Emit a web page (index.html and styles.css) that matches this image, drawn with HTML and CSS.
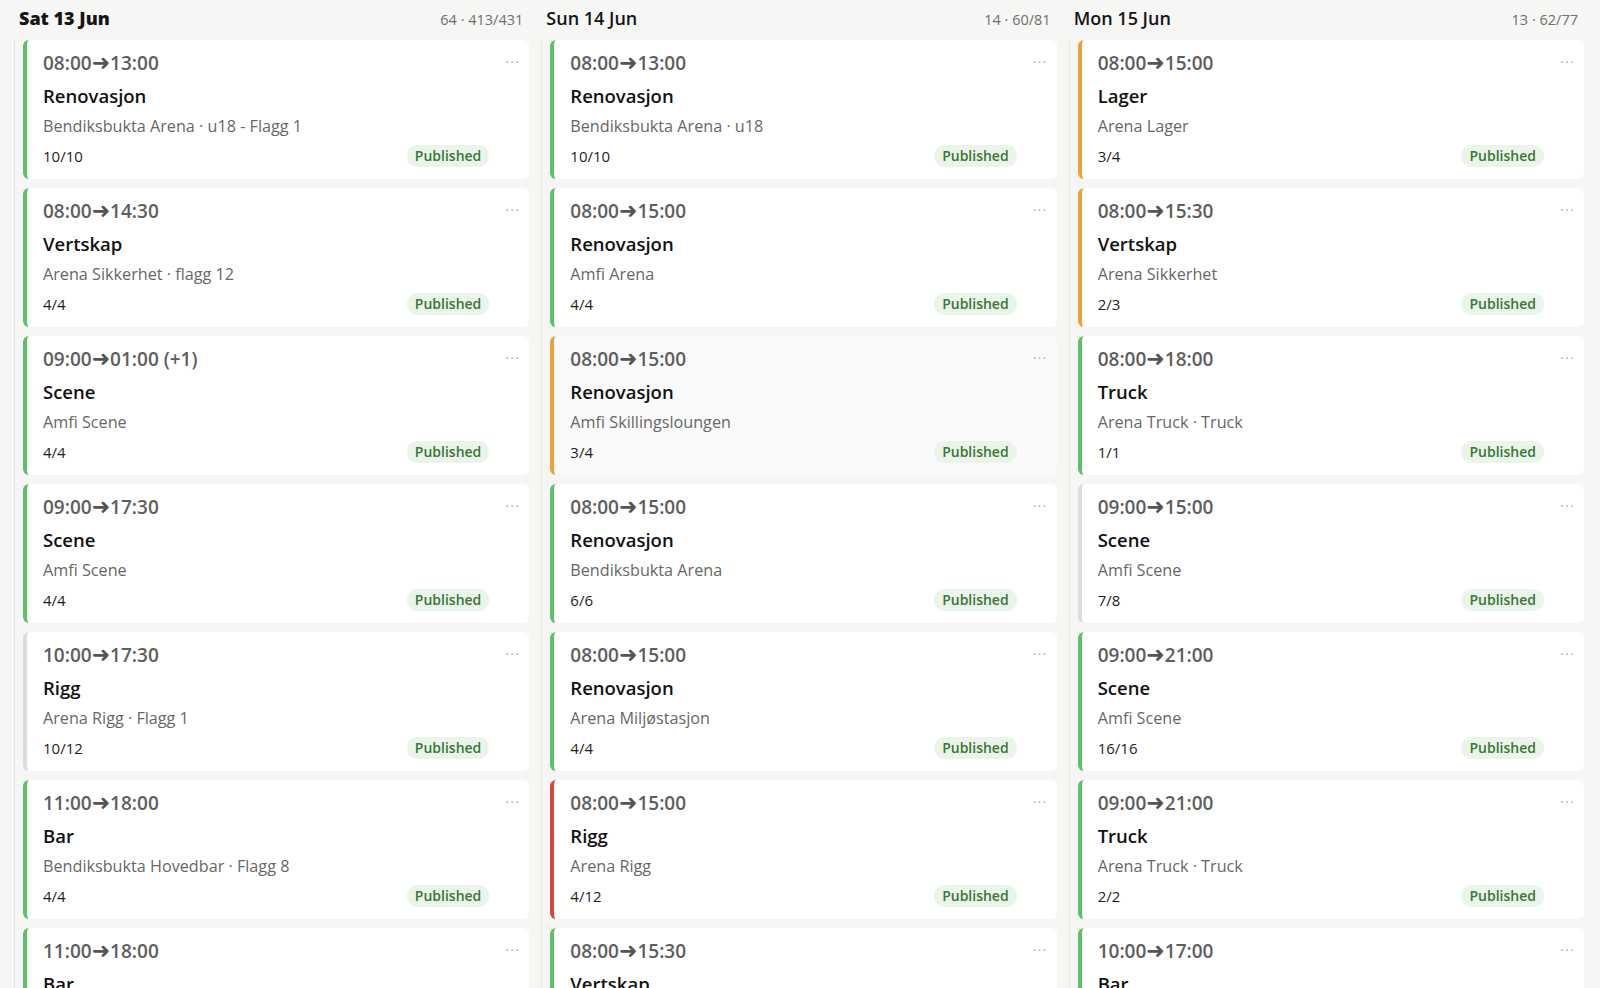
FILE: index.html
```html
<!DOCTYPE html>
<html>
  <head>
    <meta charset="utf-8">
    <link rel="stylesheet" href="styles.css">
  </head>
  <body>
    <div class="board">

      <div class="day">
        <div class="day-head">
          <span class="day-name today">Sat 13 Jun</span>
          <span class="day-count">64 · 413/431</span>
        </div>
        <div class="shifts">
          <div class="shift green">
            <span class="more">···</span>
            <div class="time">08:00<span class="arrow">➜</span>13:00</div>
            <div class="title">Renovasjon</div>
            <div class="place">Bendiksbukta Arena · u18 - Flagg 1</div>
            <div class="foot"><span class="filled">10/10</span><span class="badge">Published</span></div>
          </div>
          <div class="shift green">
            <span class="more">···</span>
            <div class="time">08:00<span class="arrow">➜</span>14:30</div>
            <div class="title">Vertskap</div>
            <div class="place">Arena Sikkerhet · flagg 12</div>
            <div class="foot"><span class="filled">4/4</span><span class="badge">Published</span></div>
          </div>
          <div class="shift green">
            <span class="more">···</span>
            <div class="time">09:00<span class="arrow">➜</span>01:00 (+1)</div>
            <div class="title">Scene</div>
            <div class="place">Amfi Scene</div>
            <div class="foot"><span class="filled">4/4</span><span class="badge">Published</span></div>
          </div>
          <div class="shift green">
            <span class="more">···</span>
            <div class="time">09:00<span class="arrow">➜</span>17:30</div>
            <div class="title">Scene</div>
            <div class="place">Amfi Scene</div>
            <div class="foot"><span class="filled">4/4</span><span class="badge">Published</span></div>
          </div>
          <div class="shift gray">
            <span class="more">···</span>
            <div class="time">10:00<span class="arrow">➜</span>17:30</div>
            <div class="title">Rigg</div>
            <div class="place">Arena Rigg · Flagg 1</div>
            <div class="foot"><span class="filled">10/12</span><span class="badge">Published</span></div>
          </div>
          <div class="shift green">
            <span class="more">···</span>
            <div class="time">11:00<span class="arrow">➜</span>18:00</div>
            <div class="title">Bar</div>
            <div class="place">Bendiksbukta Hovedbar · Flagg 8</div>
            <div class="foot"><span class="filled">4/4</span><span class="badge">Published</span></div>
          </div>
          <div class="shift green">
            <span class="more">···</span>
            <div class="time">11:00<span class="arrow">➜</span>18:00</div>
            <div class="title">Bar</div>
            <div class="place">Bendiksbukta Hovedbar · Flagg 9</div>
            <div class="foot"><span class="filled">4/4</span><span class="badge">Published</span></div>
          </div>
        </div>
      </div>

      <div class="day">
        <div class="day-head">
          <span class="day-name">Sun 14 Jun</span>
          <span class="day-count">14 · 60/81</span>
        </div>
        <div class="shifts">
          <div class="shift green">
            <span class="more">···</span>
            <div class="time">08:00<span class="arrow">➜</span>13:00</div>
            <div class="title">Renovasjon</div>
            <div class="place">Bendiksbukta Arena · u18</div>
            <div class="foot"><span class="filled">10/10</span><span class="badge">Published</span></div>
          </div>
          <div class="shift green">
            <span class="more">···</span>
            <div class="time">08:00<span class="arrow">➜</span>15:00</div>
            <div class="title">Renovasjon</div>
            <div class="place">Amfi Arena</div>
            <div class="foot"><span class="filled">4/4</span><span class="badge">Published</span></div>
          </div>
          <div class="shift orange hover">
            <span class="more">···</span>
            <div class="time">08:00<span class="arrow">➜</span>15:00</div>
            <div class="title">Renovasjon</div>
            <div class="place">Amfi Skillingsloungen</div>
            <div class="foot"><span class="filled">3/4</span><span class="badge">Published</span></div>
          </div>
          <div class="shift green">
            <span class="more">···</span>
            <div class="time">08:00<span class="arrow">➜</span>15:00</div>
            <div class="title">Renovasjon</div>
            <div class="place">Bendiksbukta Arena</div>
            <div class="foot"><span class="filled">6/6</span><span class="badge">Published</span></div>
          </div>
          <div class="shift green">
            <span class="more">···</span>
            <div class="time">08:00<span class="arrow">➜</span>15:00</div>
            <div class="title">Renovasjon</div>
            <div class="place">Arena Miljøstasjon</div>
            <div class="foot"><span class="filled">4/4</span><span class="badge">Published</span></div>
          </div>
          <div class="shift red">
            <span class="more">···</span>
            <div class="time">08:00<span class="arrow">➜</span>15:00</div>
            <div class="title">Rigg</div>
            <div class="place">Arena Rigg</div>
            <div class="foot"><span class="filled">4/12</span><span class="badge">Published</span></div>
          </div>
          <div class="shift green">
            <span class="more">···</span>
            <div class="time">08:00<span class="arrow">➜</span>15:30</div>
            <div class="title">Vertskap</div>
            <div class="place">Arena Sikkerhet</div>
            <div class="foot"><span class="filled">4/4</span><span class="badge">Published</span></div>
          </div>
        </div>
      </div>

      <div class="day">
        <div class="day-head">
          <span class="day-name">Mon 15 Jun</span>
          <span class="day-count">13 · 62/77</span>
        </div>
        <div class="shifts">
          <div class="shift orange">
            <span class="more">···</span>
            <div class="time">08:00<span class="arrow">➜</span>15:00</div>
            <div class="title">Lager</div>
            <div class="place">Arena Lager</div>
            <div class="foot"><span class="filled">3/4</span><span class="badge">Published</span></div>
          </div>
          <div class="shift orange">
            <span class="more">···</span>
            <div class="time">08:00<span class="arrow">➜</span>15:30</div>
            <div class="title">Vertskap</div>
            <div class="place">Arena Sikkerhet</div>
            <div class="foot"><span class="filled">2/3</span><span class="badge">Published</span></div>
          </div>
          <div class="shift green">
            <span class="more">···</span>
            <div class="time">08:00<span class="arrow">➜</span>18:00</div>
            <div class="title">Truck</div>
            <div class="place">Arena Truck · Truck</div>
            <div class="foot"><span class="filled">1/1</span><span class="badge">Published</span></div>
          </div>
          <div class="shift gray">
            <span class="more">···</span>
            <div class="time">09:00<span class="arrow">➜</span>15:00</div>
            <div class="title">Scene</div>
            <div class="place">Amfi Scene</div>
            <div class="foot"><span class="filled">7/8</span><span class="badge">Published</span></div>
          </div>
          <div class="shift green">
            <span class="more">···</span>
            <div class="time">09:00<span class="arrow">➜</span>21:00</div>
            <div class="title">Scene</div>
            <div class="place">Amfi Scene</div>
            <div class="foot"><span class="filled">16/16</span><span class="badge">Published</span></div>
          </div>
          <div class="shift green">
            <span class="more">···</span>
            <div class="time">09:00<span class="arrow">➜</span>21:00</div>
            <div class="title">Truck</div>
            <div class="place">Arena Truck · Truck</div>
            <div class="foot"><span class="filled">2/2</span><span class="badge">Published</span></div>
          </div>
          <div class="shift green">
            <span class="more">···</span>
            <div class="time">10:00<span class="arrow">➜</span>17:00</div>
            <div class="title">Bar</div>
            <div class="place">Bendiksbukta Hovedbar</div>
            <div class="foot"><span class="filled">4/4</span><span class="badge">Published</span></div>
          </div>
        </div>
      </div>

    </div>
  </body>
</html>
```

FILE: styles.css
```css
html,
body {
  height: 100%;
}

body {
  margin: 0;
  padding: 0;
  overflow: hidden;
  background: #f6f6f4;
  font-family: "Segoe UI", "Open Sans", "Noto Sans", sans-serif;
  color: #1b1b1b;
}

.board {
  display: grid;
  grid-template-columns: repeat(3, 1fr);
  gap: 12px;
  padding: 0 16px 0 14px;
}

.day {
  min-width: 0;
}

.day-head {
  display: flex;
  justify-content: space-between;
  align-items: baseline;
  height: 40px;
  padding: 6px 6px 0 5px;
  box-sizing: border-box;
}

.day-name {
  font-size: 18px;
  font-weight: 600;
  color: #151515;
}

.day-name.today {
  font-weight: 800;
}

.day-count {
  font-size: 14.5px;
  color: #6f6f6f;
}

.shifts {
  display: flex;
  flex-direction: column;
  gap: 9px;
  padding-left: 8px;
  border-left: 1px solid #e5e5e2;
}

.shift {
  position: relative;
  height: 139px;
  box-sizing: border-box;
  padding: 9px 40px 0 16px;
  background: #fff;
  border-left: 4px solid #ddd;
  border-radius: 6px;
}

.shift.hover {
  background: #fafafa;
}

.shift.green {
  border-left-color: #5cc066;
}

.shift.orange {
  border-left-color: #e9a23b;
}

.shift.red {
  border-left-color: #d9453d;
}

.shift.gray {
  border-left-color: #dcdcdc;
}

.more {
  position: absolute;
  top: 13px;
  right: 9px;
  font-size: 13px;
  letter-spacing: 1.5px;
  color: #a9a9a9;
}

.time {
  font-size: 19px;
  font-weight: 600;
  line-height: 28px;
  color: #5e5e5e;
}

.arrow {
  font-family: "DejaVu Sans", sans-serif;
  font-size: 22px;
  font-weight: 700;
  line-height: 20px;
  color: #555;
}

.title {
  margin-top: 6px;
  font-size: 18.5px;
  font-weight: 600;
  line-height: 26px;
  color: #121212;
}

.place {
  margin-top: 6px;
  font-size: 16.2px;
  line-height: 22px;
  color: #676767;
}

.foot {
  display: flex;
  justify-content: space-between;
  align-items: center;
  margin-top: 8px;
}

.filled {
  font-size: 15px;
  color: #1e1e1e;
}

.badge {
  padding: 1px 8px;
  border-radius: 11px;
  background: #e9f5e8;
  color: #3a7636;
  font-size: 14px;
  font-weight: 600;
  line-height: 20px;
}
```
